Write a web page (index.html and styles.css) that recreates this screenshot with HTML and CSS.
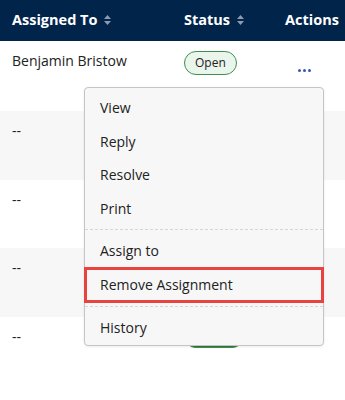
FILE: index.html
```html
<!DOCTYPE html>
<html lang="en">
<head>
    <meta charset="UTF-8">
    <meta name="viewport" content="width=device-width, initial-scale=1.0">
    <title>Assignments</title>
    <link rel="stylesheet" href="styles.css">
</head>
<body>
    <div class="table">
        <div class="head">
            <div class="cell col-assigned">Assigned To
                <svg class="sort" width="7" height="10" viewBox="0 0 7 10"><path d="M3.5 0 L7 4 L0 4 Z M0 6 L7 6 L3.5 10 Z"/></svg>
            </div>
            <div class="cell col-status">Status
                <svg class="sort" width="7" height="10" viewBox="0 0 7 10"><path d="M3.5 0 L7 4 L0 4 Z M0 6 L7 6 L3.5 10 Z"/></svg>
            </div>
            <div class="cell col-actions">Actions</div>
        </div>

        <div class="row first">
            <div class="cell col-assigned">Benjamin Bristow</div>
            <div class="cell col-status"><span class="badge">Open</span></div>
            <div class="cell col-actions">
                <button class="more" aria-label="More actions">
                    <svg width="13" height="3" viewBox="0 0 13 3"><circle cx="1.5" cy="1.5" r="1.5"/><circle cx="6.5" cy="1.5" r="1.5"/><circle cx="11.5" cy="1.5" r="1.5"/></svg>
                </button>
            </div>
        </div>
        <div class="row alt">
            <div class="cell col-assigned">--</div>
            <div class="cell col-status"></div>
            <div class="cell col-actions"></div>
        </div>
        <div class="row">
            <div class="cell col-assigned">--</div>
            <div class="cell col-status"></div>
            <div class="cell col-actions"></div>
        </div>
        <div class="row alt">
            <div class="cell col-assigned">--</div>
            <div class="cell col-status"></div>
            <div class="cell col-actions"></div>
        </div>
        <div class="row">
            <div class="cell col-assigned">--</div>
            <div class="cell col-status tight"><span class="badge dark">Closed</span></div>
            <div class="cell col-actions"></div>
        </div>

        <div class="menu">
            <div class="menu-item">View</div>
            <div class="menu-item">Reply</div>
            <div class="menu-item">Resolve</div>
            <div class="menu-item">Print</div>
            <div class="menu-divider"></div>
            <div class="menu-item">Assign to</div>
            <div class="menu-item selected">Remove Assignment</div>
            <div class="menu-divider"></div>
            <div class="menu-item">History</div>
        </div>
    </div>
</body>
</html>
```

FILE: styles.css
```css
body {
    margin: 0;
    font-family: "Open Sans", "Noto Sans", Arial, sans-serif;
    font-size: 14px;
    color: #222;
    background-color: #fff;
}
.table {
    position: relative;
    width: 345px;
}
.head {
    display: flex;
    align-items: center;
    height: 40.5px;
    background-color: #01244a;
    color: #fff;
    font-size: 14.5px;
    font-weight: bold;
    line-height: 20px;
}
.head .cell {
    display: flex;
    align-items: center;
}
.sort {
    fill: #8c9bb0;
    margin-left: 7px;
}
.cell {
    box-sizing: border-box;
    padding-left: 12px;
}
.col-assigned {
    width: 172px;
}
.col-status {
    width: 101px;
}
.col-actions {
    flex: 1;
}
.row {
    display: flex;
    height: 68.5px;
    line-height: 20px;
}
.row .cell {
    padding-top: 10px;
}
.row .cell.tight {
    padding-top: 7px;
}
.row.first {
    height: 70.5px;
}
.row.alt {
    background-color: #f7f7f7;
}
.badge {
    display: inline-block;
    box-sizing: border-box;
    height: 24px;
    padding: 0 10px;
    line-height: 22px;
    font-size: 12px;
    border: 1px solid #3f8f4f;
    border-radius: 12px;
    background-color: #eaf5eb;
}
.badge.dark {
    background-color: #2e7a3c;
    color: #fff;
}
.more {
    display: block;
    margin: 17px 0 0 13px;
    padding: 0;
    border: none;
    background: none;
    fill: #3656b8;
    line-height: 0;
}
.menu {
    position: absolute;
    top: 87px;
    left: 84px;
    width: 240px;
    box-sizing: border-box;
    padding: 3px 0 1px;
    background-color: #f7f7f7;
    border: 1px solid #c5c5c5;
    border-radius: 4px;
    box-shadow: 0 1px 3px rgba(0, 0, 0, 0.08);
}
.menu-item {
    padding: 7px 15px;
    line-height: 1.4;
    color: #222;
}
.menu-item.selected {
    outline: 3px solid #e8443f;
    outline-offset: -2px;
}
.menu-divider {
    margin: 4px 0;
    border-top: 1px dashed #d6d6d6;
}
```
